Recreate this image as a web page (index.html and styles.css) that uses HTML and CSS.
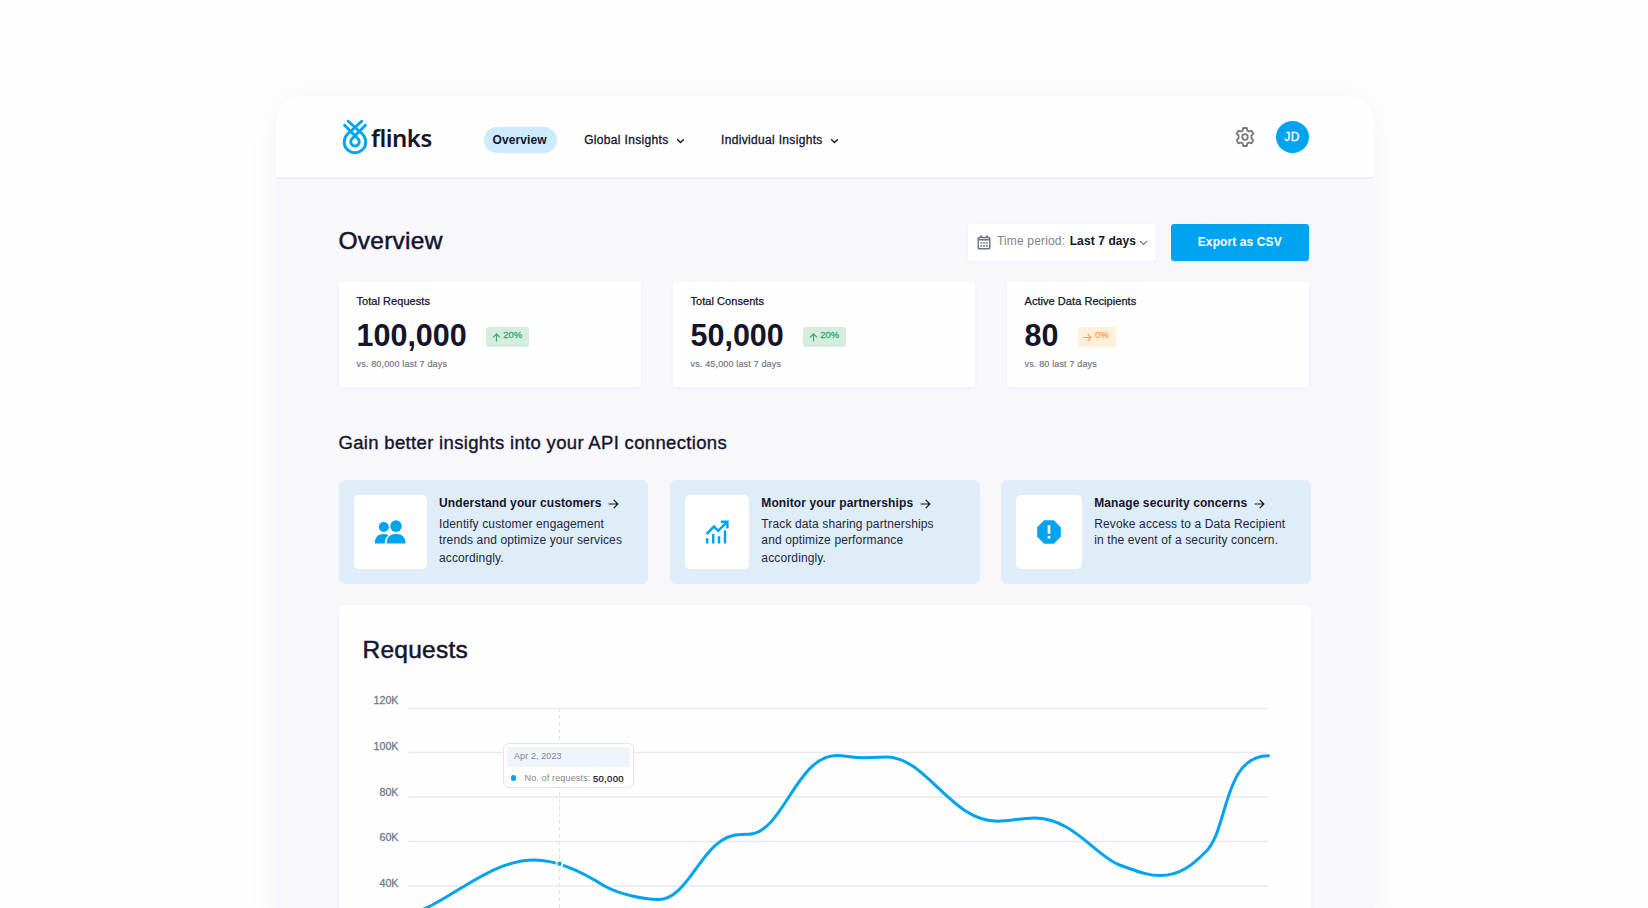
FILE: index.html
```html
<!DOCTYPE html>
<html lang="en">
<head>
    <meta charset="UTF-8">
    <title>Overview</title>
    <link rel="stylesheet" href="styles.css">
</head>
<body>
    <div class="window">
        <header class="header">
            <div class="logo">
                <svg width="26" height="35" viewBox="0 0 26 35" fill="none" stroke="#00a3ef" stroke-width="2.9" stroke-linecap="round">
                    <path d="M6.3 2.2 L20.6 15.2 A10.8 10.8 0 1 1 5.4 15.2 L19.7 2.2"/>
                    <path d="M2.6 6.3 L16 19.8 A4.2 4.2 0 1 1 10 19.8 L23.4 6.3"/>
                </svg>
                <span class="logo-text">flinks</span>
            </div>
            <nav class="nav">
                <a class="nav-item selected">Overview</a>
                <a class="nav-item">Global Insights
                    <svg class="chevron" width="9" height="6" viewBox="0 0 9 6"><path d="M1.2 1.2 L4.5 4.5 L7.8 1.2"/></svg>
                </a>
                <a class="nav-item">Individual Insights
                    <svg class="chevron" width="9" height="6" viewBox="0 0 9 6"><path d="M1.2 1.2 L4.5 4.5 L7.8 1.2"/></svg>
                </a>
            </nav>
            <div class="user">
                <svg width="20" height="20" viewBox="0 0 20 20" fill="none" stroke="#77777b" stroke-width="1.8" stroke-linejoin="round">
                    <path d="M8.2 1 H11.8 L12.4 3.6 L14 4.5 L16.5 3.7 L18.3 6.8 L16.4 8.7 V11.3 L18.3 13.2 L16.5 16.3 L14 15.5 L12.4 16.4 L11.8 19 H8.2 L7.6 16.4 L6 15.5 L3.5 16.3 L1.7 13.2 L3.6 11.3 V8.7 L1.7 6.8 L3.5 3.7 L6 4.5 L7.6 3.6 Z"/>
                    <circle cx="10" cy="10" r="2.8"/>
                </svg>
                <span class="avatar">JD</span>
            </div>
        </header>

        <main class="main">
            <div class="title-row">
                <h1 class="title">Overview</h1>
                <div class="period">
                    <svg width="14" height="15" viewBox="0 0 14 15" fill="none" stroke="#6b7182" stroke-width="1.4">
                        <rect x="1.2" y="2.4" width="11.6" height="11.4" rx="1"/>
                        <path d="M1.2 4.6 H12.8 M4 .4 V3 M10 .4 V3" stroke-width="1.8"/>
                        <path d="M3.4 8 H10.8 M3.4 10.8 H10.8" stroke-width="1.6" stroke-dasharray="1.7 1.1"/>
                    </svg>
                    <span class="period-label">Time period:</span>
                    <span class="period-value">Last 7 days</span>
                    <svg class="chevron thin" width="9" height="6" viewBox="0 0 9 6"><path d="M1 1.2 L4.5 4.6 L8 1.2"/></svg>
                </div>
                <button class="export">Export as CSV</button>
            </div>

            <div class="stats">
                <div class="stat">
                    <div class="stat-name">Total Requests</div>
                    <div class="stat-row">
                        <span class="stat-value">100,000</span>
                        <span class="badge">
                            <svg width="9" height="9" viewBox="0 0 9 9"><path d="M4.5 8.6 V1 M1 4.4 L4.5 .9 L8 4.4"/></svg>
                            <span>20%</span>
                        </span>
                    </div>
                    <div class="stat-note">vs. 80,000 last 7 days</div>
                </div>
                <div class="stat">
                    <div class="stat-name">Total Consents</div>
                    <div class="stat-row">
                        <span class="stat-value">50,000</span>
                        <span class="badge">
                            <svg width="9" height="9" viewBox="0 0 9 9"><path d="M4.5 8.6 V1 M1 4.4 L4.5 .9 L8 4.4"/></svg>
                            <span>20%</span>
                        </span>
                    </div>
                    <div class="stat-note">vs. 45,000 last 7 days</div>
                </div>
                <div class="stat">
                    <div class="stat-name">Active Data Recipients</div>
                    <div class="stat-row">
                        <span class="stat-value">80</span>
                        <span class="badge flat">
                            <svg width="9" height="9" viewBox="0 0 9 9"><path d="M.4 4.5 H8 M4.6 1 L8.1 4.5 L4.6 8"/></svg>
                            <span>0%</span>
                        </span>
                    </div>
                    <div class="stat-note">vs. 80 last 7 days</div>
                </div>
            </div>

            <h2 class="subtitle">Gain better insights into your API connections</h2>

            <div class="insights">
                <div class="insight">
                    <div class="insight-icon customers">
                        <svg width="32" height="24" viewBox="0 0 32 24" fill="#00a3ef">
                            <circle cx="9.8" cy="7" r="5"/>
                            <circle cx="22" cy="6.1" r="5.8"/>
                            <path d="M.8 23.5 C.8 17 4 14 9.8 14 C11.7 14 13.2 14.3 14.4 14.9 C12 17 10.8 20 10.8 23.5 Z"/>
                            <path d="M12.6 23.5 C12.6 17 16 14 22 14 C28 14 31.5 17 31.5 23.5 Z"/>
                        </svg>
                    </div>
                    <div class="insight-text">
                        <h3>Understand your customers
                            <svg width="11" height="10" viewBox="0 0 11 10"><path d="M.6 5 H9.8 M5.7 .8 L9.9 5 L5.7 9.2"/></svg>
                        </h3>
                        <p>Identify customer engagement</p>
                        <p>trends and optimize your services</p>
                        <p class="last">accordingly.</p>
                    </div>
                </div>
                <div class="insight">
                    <div class="insight-icon partners">
                        <svg width="24" height="24" viewBox="0 0 24 24" fill="none" stroke="#00a3ef" stroke-width="2.5">
                            <path d="M1.6 14 L9 6.6 L13.2 10.8 L21 3"/>
                            <path d="M15.8 1.8 H22.4 V8.4"/>
                            <path d="M2.2 23.5 V18.2 M8.2 23.5 V14 M14 23.5 V16.2 M20 23.5 V10.2"/>
                        </svg>
                    </div>
                    <div class="insight-text">
                        <h3>Monitor your partnerships
                            <svg width="11" height="10" viewBox="0 0 11 10"><path d="M.6 5 H9.8 M5.7 .8 L9.9 5 L5.7 9.2"/></svg>
                        </h3>
                        <p>Track data sharing partnerships</p>
                        <p>and optimize performance</p>
                        <p class="last">accordingly.</p>
                    </div>
                </div>
                <div class="insight">
                    <div class="insight-icon security">
                        <svg width="24" height="24" viewBox="0 0 24 24">
                            <path d="M7.2 .3 H16.8 L23.8 7.2 V16.8 L16.8 23.7 H7.2 L.2 16.8 V7.2 Z" fill="#00a3ef"/>
                            <path d="M12 5.3 V13.8 M12 15.9 V18.6" stroke="#fff" stroke-width="2.7"/>
                        </svg>
                    </div>
                    <div class="insight-text">
                        <h3>Manage security concerns
                            <svg width="11" height="10" viewBox="0 0 11 10"><path d="M.6 5 H9.8 M5.7 .8 L9.9 5 L5.7 9.2"/></svg>
                        </h3>
                        <p>Revoke access to a Data Recipient</p>
                        <p>in the event of a security concern.</p>
                    </div>
                </div>
            </div>

            <section class="chart-card">
                <h2 class="title">Requests</h2>
                <div class="chart">
                    <svg width="972" height="228" viewBox="338.5 680 972 228">
                        <g class="grid">
                            <path d="M408 708.3 H1267"/>
                            <path d="M408 752.5 H1267"/>
                            <path d="M408 797 H1267"/>
                            <path d="M408 841.5 H1267"/>
                            <path d="M408 886 H1267"/>
                        </g>
                        <g class="axis">
                            <text x="398" y="704.2">120K</text>
                            <text x="398" y="749.9">100K</text>
                            <text x="398" y="795.6">80K</text>
                            <text x="398" y="841.2">60K</text>
                            <text x="398" y="887">40K</text>
                        </g>
                        <path class="cursor" d="M559 708 V908"/>
                        <path class="line" d="M408 914 C446 906 486 860 534 860 C557 860 585 874 604 886 C618 894 643 899.5 658 899.5 C690 899.5 702 834.5 740 834.5 L748 834.2 C782 834.2 796 755.4 836 755.4 C846 755.4 850 757.7 864 757.7 C872 757.7 880 757 886 757 C926 757 950 821.2 997 821.2 C1011 821.2 1020 818 1034 818 C1072 818 1094 855 1119 865 C1135 870.5 1146 875.6 1160 875.6 C1180 875.6 1193 864 1205 852 C1228 831 1222 755.7 1268 755.7"/>
                        <circle class="point" cx="559" cy="863.8" r="3"/>
                    </svg>
                    <div class="tooltip">
                        <div class="tooltip-date">Apr 2, 2023</div>
                        <div class="tooltip-row">
                            <i class="dot"></i>
                            <span>No. of requests:</span>
                            <b>50,000</b>
                        </div>
                    </div>
                </div>
            </section>
        </main>
    </div>
</body>
</html>
```

FILE: styles.css
```css
*{
    margin: 0;
    padding: 0;
    box-sizing: border-box;
}
body{
    height: 908px;
    overflow: hidden;
    background: #fefefe;
    padding: 96px 274px 0 276px;
    font-family: "Liberation Sans", Arial, sans-serif;
    color: #14142b;
}
svg{
    display: block;
    flex: none;
}
.window{
    height: 840px;
    background: #f7f7fc;
    border-radius: 26px 26px 0 0;
    box-shadow: 0 0 36px rgba(0,0,0,.045);
    overflow: hidden;
}

/* header */
.header{
    display: flex;
    align-items: center;
    height: 83px;
    padding: 0 65.5px 0 66px;
    background: #fefefe;
    border-bottom: 2px solid #efeff7;
}
.logo{
    display: flex;
    align-items: center;
    width: 141.5px;
}
.logo-text{
    margin: 2px 0 0 3px;
    font: 600 24px/30px "Noto Sans", sans-serif;
    letter-spacing: -0.5px;
}
.nav{
    display: flex;
    align-items: center;
    padding-top: 7px;
}
.nav-item{
    display: flex;
    align-items: center;
    height: 26px;
    padding-bottom: 1px;
    font-size: 12px;
    letter-spacing: .33px;
    -webkit-text-stroke: .3px;
    margin-right: 36.5px;
    white-space: nowrap;
}
.nav-item.selected{
    padding: 0 10px 1px 9px;
    margin-right: 27.5px;
    border-radius: 13px;
    background: #cdebfe;
    font-weight: bold;
    letter-spacing: .1px;
    -webkit-text-stroke: 0;
}
.chevron{
    margin: 2px 0 0 7px;
    fill: none;
    stroke: #14142b;
    stroke-width: 1.3;
}
.chevron.thin{
    margin: 1px 0 0 2.5px;
    stroke: #5f6678;
    stroke-width: 1.1;
}
.user{
    display: flex;
    align-items: center;
    margin-left: auto;
    gap: 20.5px;
}
.avatar{
    width: 33px;
    height: 32px;
    border-radius: 50%;
    background: #00a3ef;
    color: #fff;
    font-size: 12px;
    line-height: 32px;
    text-align: center;
    letter-spacing: .3px;
    -webkit-text-stroke: .3px;
}

/* title and controls */
.main{
    padding: 45px 63px 0 62.5px;
}
.title-row{
    display: flex;
    height: 36.5px;
    padding-right: 2.5px;
}
.title{
    font-size: 24.5px;
    font-weight: normal;
    line-height: 34px;
    letter-spacing: .25px;
    -webkit-text-stroke: .5px;
}
.period{
    display: flex;
    align-items: center;
    width: 188px;
    margin-left: auto;
    padding-left: 9px;
    background: #fff;
    border-radius: 3px;
    box-shadow: 0 1px 5px rgba(20,20,80,.03);
    font-size: 12px;
}
.period-label{
    margin: -2px 4.5px 0 6px;
    color: #83838c;
    letter-spacing: .16px;
}
.period-value{
    margin-top: -2px;
    font-weight: bold;
    letter-spacing: .1px;
}
.export{
    width: 137.5px;
    margin-left: 15px;
    border: none;
    border-radius: 3px;
    background: #00a3ef;
    color: #fff;
    font: bold 12px "Liberation Sans", Arial, sans-serif;
    letter-spacing: .1px;
}

/* stats */
.stats{
    display: grid;
    grid-template-columns: repeat(3, 1fr);
    column-gap: 31.5px;
    margin-top: 21.5px;
    padding-right: 2px;
}
.stat{
    height: 105px;
    padding: 11.5px 18px 0;
    background: #fefefe;
    border-radius: 3px;
    box-shadow: 0 2px 5px rgba(20,20,80,.035);
}
.stat-name{
    font-size: 11px;
    line-height: 14px;
    letter-spacing: .05px;
    -webkit-text-stroke: .25px;
}
.stat-row{
    display: flex;
    align-items: center;
    gap: 19.5px;
    height: 36px;
    margin: 9px 0 5px;
}
.stat-value{
    font-size: 30.5px;
    font-weight: bold;
    line-height: 36px;
}
.badge{
    display: flex;
    height: 20px;
    margin-top: 5px;
    padding: 0 7px 0 5.5px;
    gap: 2.5px;
    border-radius: 3px;
    background: #d5ecdf;
    color: #34ab76;
    font-size: 9.5px;
    line-height: 16px;
    -webkit-text-stroke: .3px;
}
.badge svg{
    margin-top: 5.5px;
    fill: none;
    stroke: #34ab76;
    stroke-width: 1.2;
}
.badge.flat{
    background: #fff0d9;
    color: #ff9f5a;
}
.badge.flat svg{
    stroke: #ff9f5a;
}
.stat-note{
    color: #747988;
    font-size: 9px;
    line-height: 12px;
    letter-spacing: .16px;
    -webkit-text-stroke: .2px;
}

/* insights */
.subtitle{
    margin-top: 43.5px;
    font-size: 18.5px;
    font-weight: normal;
    line-height: 24px;
    letter-spacing: .33px;
    -webkit-text-stroke: .35px;
}
.insights{
    display: grid;
    grid-template-columns: repeat(3, 1fr);
    column-gap: 21.5px;
    margin-top: 25.5px;
}
.insight{
    display: flex;
    height: 104px;
    padding: 15px;
    gap: 12.5px;
    background: #dfedf9;
    border-radius: 6px;
}
.insight-icon{
    display: flex;
    align-items: center;
    justify-content: center;
    flex: none;
    height: 74px;
    background: #fff;
    border-radius: 5px;
}
.customers{
    width: 73px;
}
.partners{
    width: 64px;
}
.security{
    width: 65.5px;
}
.insight-text{
    white-space: nowrap;
    font-size: 12px;
    line-height: 16px;
}
.insight-text h3{
    display: flex;
    align-items: center;
    margin-bottom: 5px;
    font-size: 12px;
    letter-spacing: .1px;
}
.insight-text h3 svg{
    margin: 2px 0 0 6.5px;
    fill: none;
    stroke: #14142b;
    stroke-width: 1.2;
}
.insight-text p{
    color: #23263c;
    letter-spacing: .13px;
}
.insight-text .last{
    margin-top: 2px;
}

/* chart */
.chart-card{
    height: 340px;
    margin-top: 21px;
    padding-top: 28px;
    background: #fefefe;
    border-radius: 6px;
    box-shadow: 0 0 4px rgba(20,20,80,.03);
}
.chart-card .title{
    padding-left: 24px;
}
.chart{
    position: relative;
    margin-top: 13px;
}
.grid path{
    stroke: #e4e9f4;
    stroke-width: 1.3;
}
.axis text{
    fill: #747988;
    font-size: 10.7px;
    text-anchor: end;
    stroke: #747988;
    stroke-width: .3;
}
.cursor{
    stroke: #e1e1ea;
    stroke-dasharray: 4 3;
}
.line{
    fill: none;
    stroke: #00a3ef;
    stroke-width: 3;
    stroke-linecap: round;
}
.point{
    fill: #00a3ef;
    stroke: #fff;
    stroke-width: 1.6;
}
.tooltip{
    position: absolute;
    left: 164.5px;
    top: 63px;
    width: 131px;
    height: 45px;
    padding: 3px;
    background: #fff;
    border: 1px solid #dfe5f2;
    border-radius: 6px;
    font-size: 9px;
    color: #83838c;
}
.tooltip-date{
    height: 20px;
    padding-left: 7px;
    border-radius: 3px 3px 0 0;
    background: #eff3fb;
    line-height: 18.5px;
    letter-spacing: .1px;
}
.tooltip-row{
    display: flex;
    align-items: center;
    height: 22px;
    padding-left: 3.5px;
    letter-spacing: .15px;
    white-space: nowrap;
}
.dot{
    width: 5.5px;
    height: 5.5px;
    margin-right: 8.5px;
    border-radius: 50%;
    background: #00a3ef;
}
.tooltip-row b{
    margin-left: 2.5px;
    font-size: 9.5px;
    font-weight: normal;
    letter-spacing: .3px;
    color: #14142b;
    -webkit-text-stroke: .25px;
}
```
